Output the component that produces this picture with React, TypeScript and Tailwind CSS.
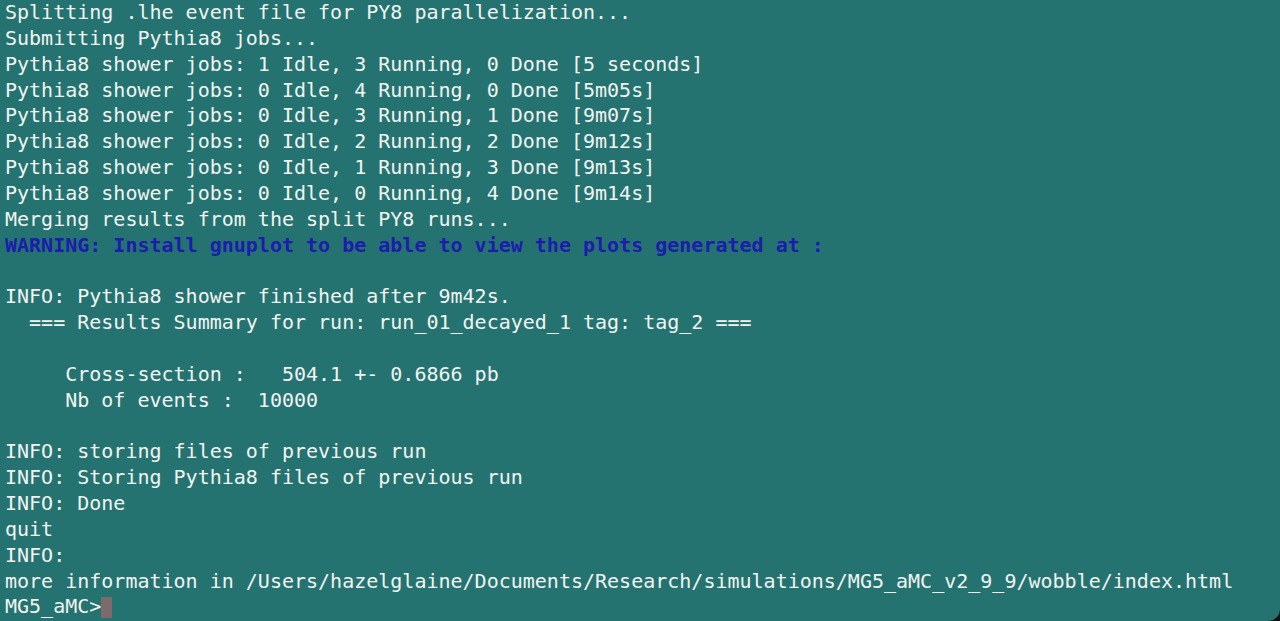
const lines: { text: string; kind?: 'warn' }[] = [
  { text: 'Splitting .lhe event file for PY8 parallelization...' },
  { text: 'Submitting Pythia8 jobs...' },
  { text: 'Pythia8 shower jobs: 1 Idle, 3 Running, 0 Done [5 seconds]' },
  { text: 'Pythia8 shower jobs: 0 Idle, 4 Running, 0 Done [5m05s]' },
  { text: 'Pythia8 shower jobs: 0 Idle, 3 Running, 1 Done [9m07s]' },
  { text: 'Pythia8 shower jobs: 0 Idle, 2 Running, 2 Done [9m12s]' },
  { text: 'Pythia8 shower jobs: 0 Idle, 1 Running, 3 Done [9m13s]' },
  { text: 'Pythia8 shower jobs: 0 Idle, 0 Running, 4 Done [9m14s]' },
  { text: 'Merging results from the split PY8 runs...' },
  { text: 'WARNING: Install gnuplot to be able to view the plots generated at :', kind: 'warn' },
  { text: '' },
  { text: 'INFO: Pythia8 shower finished after 9m42s.' },
  { text: '  === Results Summary for run: run_01_decayed_1 tag: tag_2 ===' },
  { text: '' },
  { text: '     Cross-section :   504.1 +- 0.6866 pb' },
  { text: '     Nb of events :  10000' },
  { text: '' },
  { text: 'INFO: storing files of previous run' },
  { text: 'INFO: Storing Pythia8 files of previous run' },
  { text: 'INFO: Done' },
  { text: 'quit' },
  { text: 'INFO: ' },
  { text: 'more information in /Users/hazelglaine/Documents/Research/simulations/MG5_aMC_v2_9_9/wobble/index.html' },
];

export default function App() {
  return (
    <div className="h-[621px] w-[1280px] overflow-hidden bg-[#111]">
      <div
        className="h-full w-full overflow-hidden rounded-br-[12px] bg-[#257370] pl-[5px] text-[20px] leading-[25.85px] text-[#f1f3f2]"
        style={{ fontFamily: '"DejaVu Sans Mono", "Liberation Mono", monospace' }}
      >
        {lines.map((l, i) => (
          <div
            key={i}
            className={
              l.kind === 'warn'
                ? 'h-[25.85px] whitespace-pre font-bold text-[#1c1cad]'
                : 'h-[25.85px] whitespace-pre'
            }
          >
            {l.text}
          </div>
        ))}
        <div className="flex h-[25.85px] items-center whitespace-pre">
          <span>MG5_aMC&gt;</span>
          <span className="inline-block h-[21px] w-[11px] bg-[#7d6a6b]" />
        </div>
      </div>
    </div>
  );
}
